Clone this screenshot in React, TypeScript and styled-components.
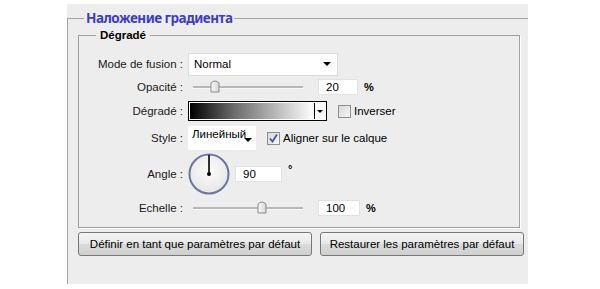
import React from 'react';
import styled, { createGlobalStyle } from 'styled-components';

const GlobalStyle = createGlobalStyle`
  html, body {
    margin: 0;
    padding: 0;
    background: #ffffff;
  }
  body {
    font-family: "Liberation Sans", Arial, sans-serif;
    font-size: 11px;
    color: #000;
  }
`;

const Page = styled.div`
  width: 600px;
  height: 289px;
  padding: 4px 0 0 67px;
  box-sizing: border-box;
`;

const Panel = styled.div`
  width: 461px;
  height: 280px;
  background: #ededed;
  display: flex;
  flex-direction: column;
`;

const OuterSet = styled.fieldset`
  margin: 5px 0 0 0;
  padding: 0 0 0 10px;
  border: none;
  border-top: 1px solid #a3a3a3;
  border-left: 1px solid #a3a3a3;
  flex: 1;
  min-width: 0;
`;

const OuterLegend = styled.legend`
  margin-left: 6px;
  padding: 0 2px 0 2px;
  font-family: "Noto Sans", "DejaVu Sans", sans-serif;
  font-weight: bold;
  font-size: 13.5px;
  letter-spacing: -0.5px;
  line-height: 18px;
  color: #3d3dc8;
`;

const InnerSet = styled.fieldset`
  margin: 1px 0 0 0;
  padding: 10px 0 7px 0;
  width: 442px;
  box-sizing: border-box;
  border: 1px solid #a0a0a0;
  box-shadow: 1px 1px 0 #ffffff;
  min-width: 0;
`;

const InnerLegend = styled.legend`
  margin-left: 17px;
  padding: 0 4px;
  font-weight: bold;
  font-size: 11.5px;
  line-height: 14px;
`;

const Rows = styled.div`
  display: grid;
  grid-template-columns: 104px 1fr;
  column-gap: 5px;
`;

const Label = styled.div<{ $h: number }>`
  height: ${p => p.$h}px;
  display: flex;
  align-items: center;
  justify-content: flex-end;
  font-size: 11.5px;
  color: #1a1a1a;
  white-space: nowrap;
`;

const Cell = styled.div<{ $h: number }>`
  height: ${p => p.$h}px;
  display: flex;
  align-items: center;
  gap: 5px;
`;

const Select = styled.div<{ $w: number; $h: number }>`
  width: ${p => p.$w}px;
  height: ${p => p.$h}px;
  background: #ffffff;
  border: 1px solid #dadada;
  box-sizing: border-box;
  display: flex;
  align-items: center;
  justify-content: space-between;
  padding: 0 6px 0 5px;
  font-size: 11.5px;
`;

const Arrow = styled.span`
  width: 0;
  height: 0;
  border-left: 4px solid transparent;
  border-right: 4px solid transparent;
  border-top: 4px solid #000;
`;

const StyleSelect = styled.div`
  width: 68px;
  height: 24px;
  background: #fff;
  box-sizing: border-box;
  position: relative;
  padding: 2px 0 0 4px;
  font-size: 11.5px;
  align-self: center;
`;

const StyleArrow = styled(Arrow)`
  position: absolute;
  right: 4px;
  top: 12px;
`;

const SliderTrack = styled.div`
  width: 110px;
  height: 2px;
  margin-left: 5px;
  margin-right: 10px;
  background: #b8b8b8;
  border-bottom: 1px solid #f8f8f8;
  position: relative;
`;

const Thumb = styled.svg`
  position: absolute;
  top: -7px;
  margin-left: -5px;
`;

const Input = styled.div<{ $w: number }>`
  width: ${p => p.$w}px;
  height: 16px;
  background: #fff;
  border: 1px solid #e2e2e2;
  box-sizing: border-box;
  padding-left: 7px;
  display: flex;
  align-items: center;
  font-size: 11.5px;
`;

const Unit = styled.span<{ $up?: boolean }>`
  font-weight: bold;
  font-size: 11px;
  margin-left: 1px;
  align-self: ${p => (p.$up ? 'flex-start' : 'center')};
  margin-top: ${p => (p.$up ? '11px' : '0')};
`;

const GradientBox = styled.div`
  width: 139px;
  height: 20px;
  border: 1px solid #000;
  box-sizing: border-box;
  display: flex;
  padding: 1px;
  background: #fff;
`;

const GradientFill = styled.div`
  flex: 1;
  background: linear-gradient(to right, #000 0%, #6a6a6a 35%, #fff 100%);
`;

const GradientDrop = styled.div`
  width: 10px;
  border-left: 1px solid #000;
  display: flex;
  align-items: center;
  justify-content: center;
  background: #fff;
`;

const SmallArrow = styled.span`
  width: 0;
  height: 0;
  border-left: 3px solid transparent;
  border-right: 3px solid transparent;
  border-top: 3px solid #000;
`;

const Check = styled.div`
  width: 13px;
  height: 13px;
  box-sizing: border-box;
  border: 1px solid #8f8f8f;
  background: linear-gradient(135deg, #d8d8d8, #f6f6f6);
  margin-left: 6px;
  display: flex;
  align-items: center;
  justify-content: center;
`;

const CheckText = styled.span`
  font-size: 11.5px;
  margin-left: -2px;
`;

const Dial = styled.svg`
  display: block;
`;

const ButtonRow = styled.div`
  display: flex;
  gap: 8px;
  margin-top: 4px;
`;

const Button = styled.button<{ $w: number }>`
  width: ${p => p.$w}px;
  height: 24px;
  border: 1px solid #777;
  border-radius: 3px;
  background: linear-gradient(to bottom, #f4f4f4 0%, #e8e8e8 50%, #dadada 51%, #d0d0d0 100%);
  font-family: "Liberation Sans", Arial, sans-serif;
  font-size: 11.5px;
  color: #000;
  padding: 0;
`;

const SliderThumb = ({ pos }: { pos: number }) => (
  <Thumb width="10" height="14" viewBox="0 0 10 14" style={{ left: `${pos * 100}%` }}>
    <defs>
      <linearGradient id="tg" x1="0" x2="1">
        <stop offset="0" stopColor="#fafafa" />
        <stop offset="1" stopColor="#d6d6d6" />
      </linearGradient>
    </defs>
    <path d="M1 13 L1 4 Q5 0 9 4 L9 13 Z" fill="url(#tg)" stroke="#8a8a8a" strokeWidth="1" />
  </Thumb>
);

export default function App() {
  return (
    <>
      <GlobalStyle />
      <Page>
        <Panel>
          <OuterSet>
            <OuterLegend>Наложение градиента</OuterLegend>
            <InnerSet>
              <InnerLegend>Dégradé</InnerLegend>
              <Rows>
                <Label $h={24}>Mode de fusion :</Label>
                <Cell $h={24}>
                  <Select $w={150} $h={23}>
                    Normal
                    <Arrow />
                  </Select>
                </Cell>

                <Label $h={22}>Opacité :</Label>
                <Cell $h={22}>
                  <SliderTrack>
                    <SliderThumb pos={0.2} />
                  </SliderTrack>
                  <Input $w={40}>20</Input>
                  <Unit>%</Unit>
                </Cell>

                <Label $h={26}>Dégradé :</Label>
                <Cell $h={26}>
                  <GradientBox>
                    <GradientFill />
                    <GradientDrop>
                      <SmallArrow />
                    </GradientDrop>
                  </GradientBox>
                  <Check />
                  <CheckText>Inverser</CheckText>
                </Cell>

                <Label $h={28}>Style :</Label>
                <Cell $h={28}>
                  <StyleSelect>
                    Линейный
                    <StyleArrow />
                  </StyleSelect>
                  <Check>
                    <svg width="11" height="11" viewBox="0 0 11 11">
                      <path d="M2 5.5 L4.5 8.5 L9 1.5" fill="none" stroke="#3a55a8" strokeWidth="1.8" />
                    </svg>
                  </Check>
                  <CheckText>Aligner sur le calque</CheckText>
                </Cell>

                <Label $h={44}>Angle :</Label>
                <Cell $h={44}>
                  <Dial width="42" height="42" viewBox="0 0 42 42">
                    <defs>
                      <radialGradient id="dg" cx="0.5" cy="0.4" r="0.6">
                        <stop offset="0" stopColor="#fbfbfb" />
                        <stop offset="1" stopColor="#e6e6e6" />
                      </radialGradient>
                    </defs>
                    <circle cx="21" cy="21" r="19.5" fill="url(#dg)" stroke="#6c75a0" strokeWidth="2" />
                    <line x1="21" y1="2" x2="21" y2="21" stroke="#000" strokeWidth="1.6" />
                    <circle cx="21" cy="21" r="2" fill="#000" />
                  </Dial>
                  <Input $w={47}>90</Input>
                  <Unit $up>°</Unit>
                </Cell>

                <Label $h={24}>Echelle :</Label>
                <Cell $h={24}>
                  <SliderTrack>
                    <SliderThumb pos={0.63} />
                  </SliderTrack>
                  <Input $w={42}>100</Input>
                  <Unit>%</Unit>
                </Cell>
              </Rows>
            </InnerSet>
            <ButtonRow>
              <Button $w={234}>Définir en tant que paramètres par défaut</Button>
              <Button $w={204}>Restaurer les paramètres par défaut</Button>
            </ButtonRow>
          </OuterSet>
        </Panel>
      </Page>
    </>
  );
}
